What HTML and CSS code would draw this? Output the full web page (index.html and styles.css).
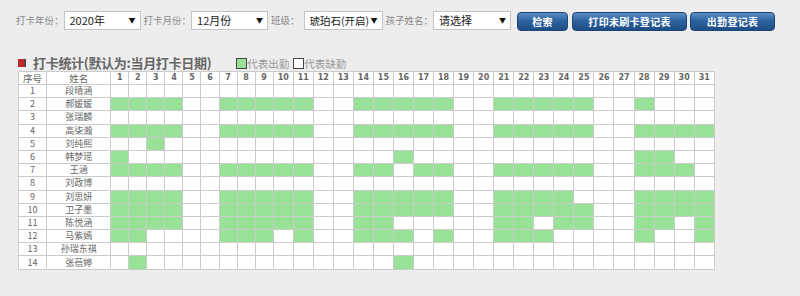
FILE: index.html
```html
<!DOCTYPE html>
<html lang="zh-CN">
<head>
  <meta charset="UTF-8" />
  <title>打卡统计</title>
  <link rel="stylesheet" href="styles.css">
</head>
<body>
  <div class="toolbar">
    <span class="label">打卡年份：</span>
    <div class="select w77"><span>2020年</span><i>▼</i></div>
    <span class="label">打卡月份：</span>
    <div class="select w77"><span>12月份</span><i>▼</i></div>
    <span class="label">班级：</span>
    <div class="select w79 gap-l"><span>琥珀石(开启)</span><i>▼</i></div>
    <span class="label">孩子姓名：</span>
    <div class="select w78"><span>请选择</span><i>▼</i></div>
    <button class="btn w51">检索</button>
    <button class="btn w115">打印未刷卡登记表</button>
    <button class="btn w85">出勤登记表</button>
  </div>

  <div class="title-row">
    <span class="mark"></span>
    <h2>打卡统计(默认为:当月打卡日期)</h2>
    <span class="legend first"><i class="box on"></i>代表出勤</span>
    <span class="legend"><i class="box"></i>代表缺勤</span>
  </div>

  <table class="stats" id="stats"></table>

  <script>
    const students = [
      ["段晴涵", ""],
      ["郝媛媛", "1-4,7-11,14-18,21-25,28"],
      ["张瑞麟", ""],
      ["高柒瀚", "1-4,7-11,14-18,21-25,28-31"],
      ["刘纯熙", "3"],
      ["韩梦瑶", "1,16,28-29"],
      ["王涵", "1-4,7-11,14-15,17-18,21-25,28-30"],
      ["刘政博", ""],
      ["刘思妍", "1-4,7-11,14-18,21-24,28-31"],
      ["卫子墨", "1-4,7-11,14-18,21-25,28-31"],
      ["陈悦涵", "1-4,7-11,14-15,21-22,24-25,28-29,31"],
      ["马紫嫣", "1-2,7-9,11,14-16,18,21-23,28,31"],
      ["孙瑞东祺", ""],
      ["张蓓婷", "2,16"]
    ];

    function parseDays(str) {
      const days = new Set();
      str.split(",").filter(Boolean).forEach(part => {
        const [a, b] = part.split("-").map(Number);
        for (let d = a; d <= (b || a); d++) days.add(d);
      });
      return days;
    }

    const dayNums = Array.from({ length: 31 }, (_, i) => i + 1);

    let html = "<colgroup><col class='c-no'><col class='c-name'>" +
      dayNums.map(d => `<col class="${d < 10 ? 'c-d1' : 'c-d2'}">`).join("") +
      "</colgroup>";

    html += "<tr class='head'><th class='cn'>序号</th><th class='cn'>姓名</th>" +
      dayNums.map(d => `<th>${d}</th>`).join("") + "</tr>";

    html += students.map(([name, str], i) => {
      const days = parseDays(str);
      return `<tr><td>${i + 1}</td><td>${name}</td>` +
        dayNums.map(d => `<td${days.has(d) ? " class='on'" : ""}></td>`).join("") +
        "</tr>";
    }).join("");

    document.getElementById("stats").innerHTML = html;
  </script>
</body>
</html>
```

FILE: styles.css
```css
body {
  margin: 0;
  background: #ededed;
  font-family: "Noto Sans CJK SC", sans-serif;
  color: #555;
}

/* top filter bar */
.toolbar {
  display: flex;
  align-items: center;
  padding: 10px 0 0 16px;
  height: 20px;
}
.label {
  font-size: 9.5px;
  color: #888;
  white-space: nowrap;
}
.select {
  box-sizing: border-box;
  height: 19px;
  margin-right: 3px;
  padding: 0 4px 0 5px;
  display: flex;
  align-items: center;
  justify-content: space-between;
  background: #fff;
  border: 1px solid #c4c4c4;
  font-size: 11px;
  color: #222;
  white-space: nowrap;
}
.select span {
  overflow: hidden;
}
.select i {
  font-style: normal;
  font-size: 7px;
  color: #111;
  margin-left: 2px;
}
.select.gap-l {
  margin-left: 4px;
  font-size: 10.5px;
}
.w77 { width: 77px; }
.w78 { width: 78px; }
.w79 { width: 79px; }

.btn {
  box-sizing: border-box;
  height: 19px;
  margin: 2px 0 0 3px;
  padding: 0;
  border: 1px solid #1c4575;
  border-radius: 4px;
  background: linear-gradient(#5d8fc6, #2c62a0 45%, #1d4e86);
  color: #fff;
  font-family: "Noto Sans CJK SC", sans-serif;
  font-size: 10px;
  font-weight: bold;
  letter-spacing: 0.3px;
}
.w51 { width: 51px; }
.w115 { width: 115px; margin-left: 4px; }
.w85 { width: 85px; }

/* section title */
.title-row {
  display: flex;
  align-items: center;
  margin: 25px 0 0 18px;
  height: 16px;
}
.mark {
  width: 6px;
  height: 8px;
  background: #c4262d;
  border-right: 2px solid #4a4a4a;
}
.title-row h2 {
  margin: 0 0 0 7px;
  font-size: 13px;
  font-weight: bold;
  color: #666;
  line-height: 16px;
  letter-spacing: -0.3px;
}
.legend {
  display: flex;
  align-items: center;
  font-size: 10.5px;
  color: #999;
  margin-left: 4px;
}
.legend.first {
  margin-left: 25px;
}
.box {
  box-sizing: border-box;
  width: 11px;
  height: 11px;
  background: #fff;
  border: 1px solid #444;
}
.box.on {
  background: #97e297;
}

/* attendance grid */
.stats {
  margin: 0 0 0 18px;
  border-collapse: collapse;
  table-layout: fixed;
  width: 697px;
  background: #fff;
  font-size: 9px;
  color: #666;
}
.c-no { width: 28px; }
.c-name { width: 64px; }
.c-d1 { width: 18px; }
.c-d2 { width: 20px; }
.stats th,
.stats td {
  border: 1px solid #cbcbcb;
  padding: 0;
  text-align: center;
  height: 12.2px;
  line-height: 12px;
  overflow: hidden;
  white-space: nowrap;
}
.stats th {
  height: 11px;
  font-family: "DejaVu Sans", sans-serif;
  font-size: 8px;
  font-weight: bold;
  color: #666;
}
.stats th.cn {
  font-family: "Noto Sans CJK SC", sans-serif;
  font-size: 9.5px;
  font-weight: normal;
}
.stats td.on {
  background: #97e297;
}
```
